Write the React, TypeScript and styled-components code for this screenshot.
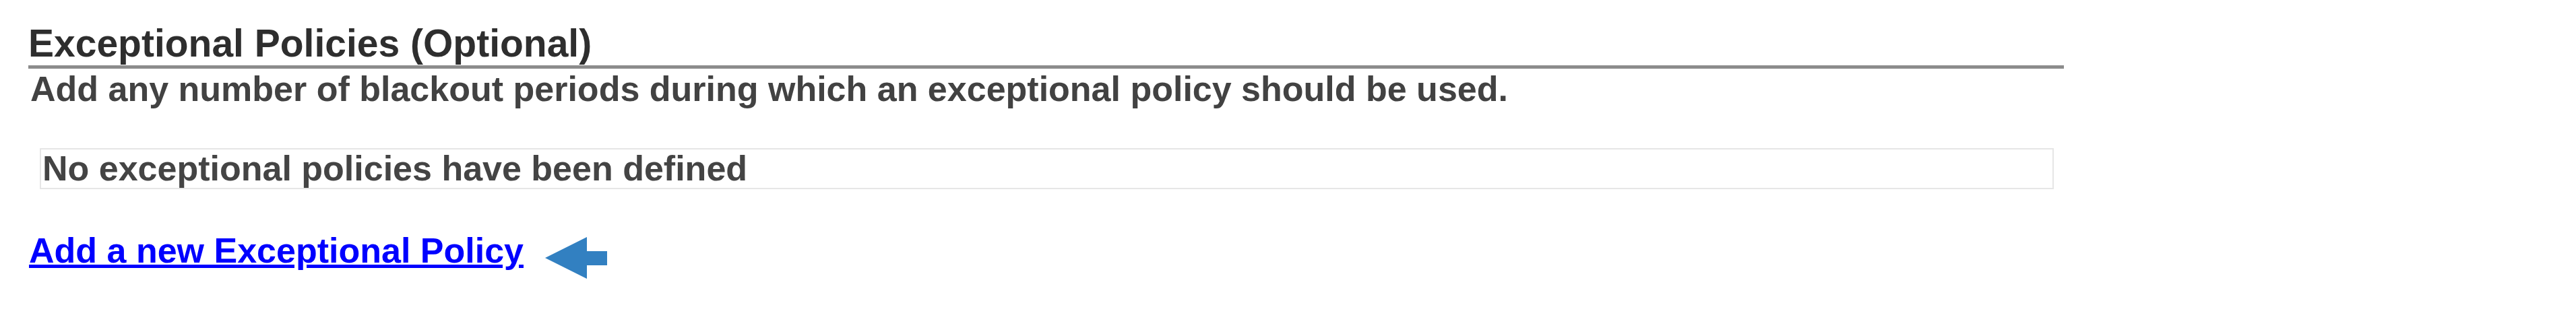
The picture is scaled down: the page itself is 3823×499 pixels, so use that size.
import React from 'react';
import styled, { createGlobalStyle } from "styled-components";

const GlobalStyle = createGlobalStyle`
    html, body {
        margin: 0;
        padding: 0;
        background: #ffffff;
    }
    body {
        font-family: "Liberation Sans", Arial, sans-serif;
    }
`;

const Page = styled.div`
    width: 3021px;
    padding: 32px 0 0 42px;
`;

const SectionTitle = styled.h2`
    margin: 0;
    padding-bottom: 1px;
    font-size: 57px;
    line-height: 64px;
    font-weight: bold;
    color: #2e2e2e;
    border-bottom: 5px solid #8c8c8c;
`;

const Description = styled.p`
    margin: 0;
    padding-left: 3px;
    font-size: 52px;
    line-height: 60px;
    font-weight: bold;
    color: #424242;
`;

const EmptyBox = styled.div`
    margin: 58px 15px 0 17px;
    padding-left: 2px;
    border: 2px solid #e6e6e6;
    font-size: 52px;
    line-height: 57px;
    font-weight: bold;
    color: #444444;
`;

const ActionRow = styled.div`
    display: flex;
    align-items: flex-start;
    margin-top: 61px;
    padding-left: 1px;
`;

const AddLink = styled.a`
    font-size: 52px;
    line-height: 60px;
    font-weight: bold;
    color: #0000ff;
    text-decoration: underline;
    cursor: pointer;
`;

const Pointer = styled.svg`
    flex: none;
    margin: 10px 0 0 32px;
`;

function ArrowLeft() {
    return (
        <Pointer width="92" height="62" viewBox="0 0 92 62">
            <polygon points="0,31 62,0 62,21 92,21 92,42 62,42 62,62" fill="#3280c1" />
        </Pointer>
    );
}

export default function App() {
    return (
        <>
            <GlobalStyle />
            <Page>
                <SectionTitle>Exceptional Policies (Optional)</SectionTitle>
                <Description>Add any number of blackout periods during which an exceptional policy should be used.</Description>
                <EmptyBox>No exceptional policies have been defined</EmptyBox>
                <ActionRow>
                    <AddLink href="#">Add a new Exceptional Policy</AddLink>
                    <ArrowLeft />
                </ActionRow>
            </Page>
        </>
    );
}
